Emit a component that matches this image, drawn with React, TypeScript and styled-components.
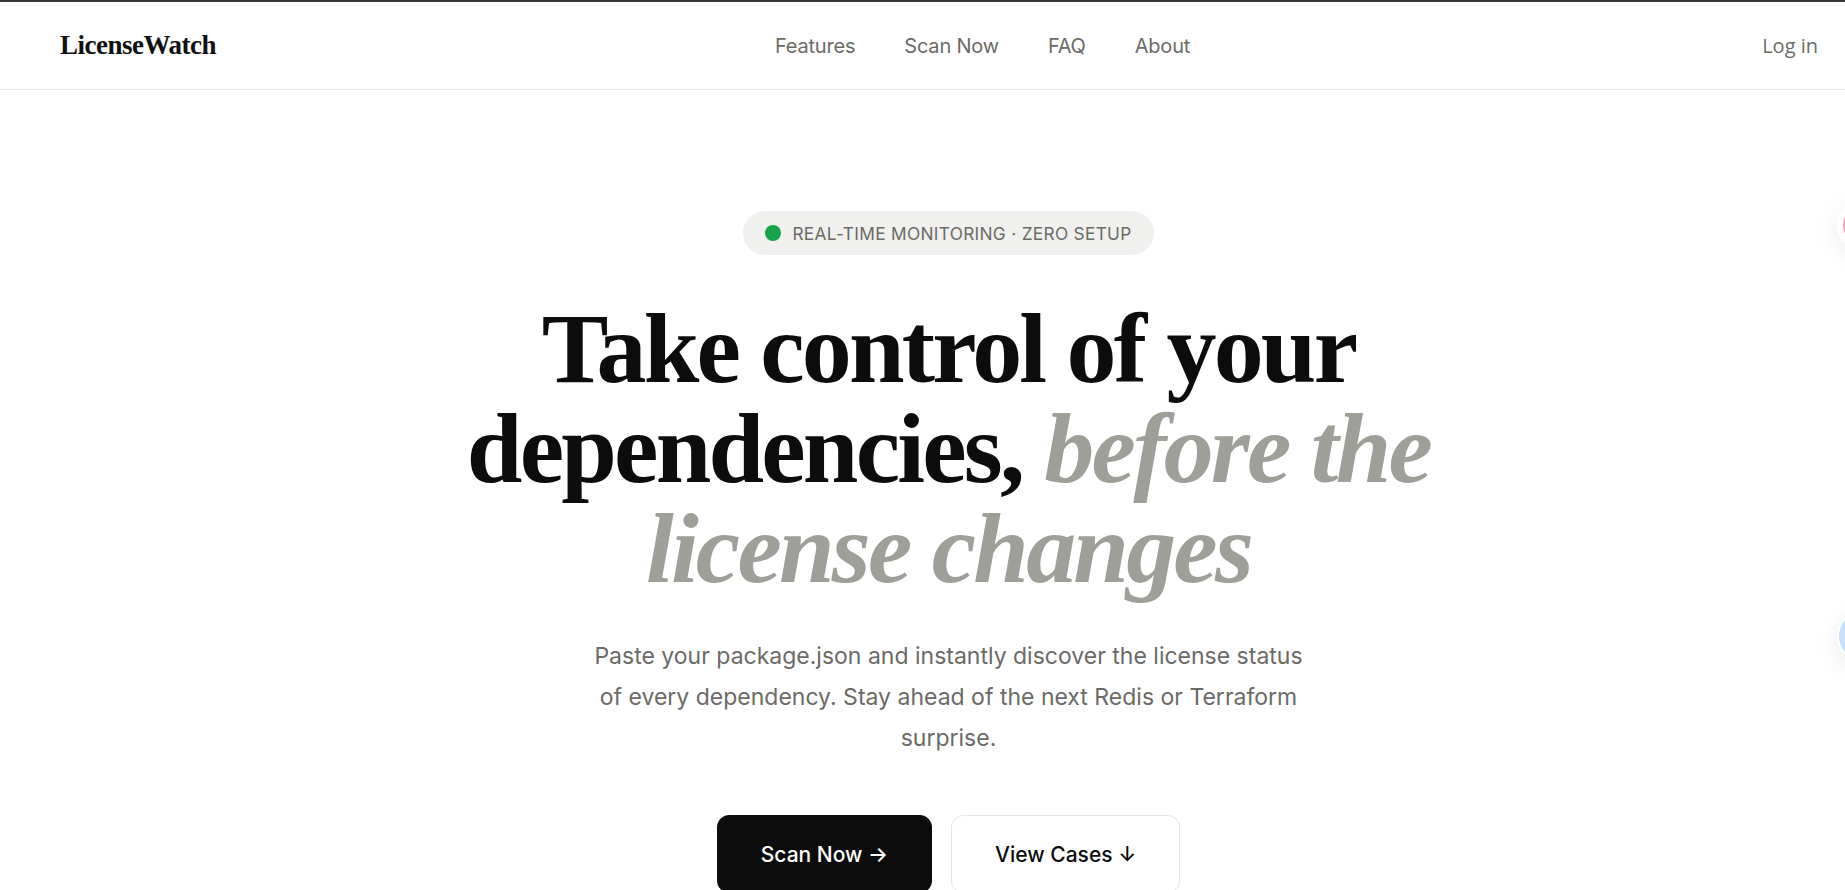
import React from "react";
import styled, { createGlobalStyle } from "styled-components";

const GlobalStyle = createGlobalStyle`
  html, body {
    margin: 0;
    padding: 0;
    background: #ffffff;
    overflow: hidden;
  }
  body {
    font-family: Inter, "DejaVu Sans", sans-serif;
    border-top: 2px solid #33393b;
  }
  * {
    box-sizing: border-box;
  }
`;

const Page = styled.div`
  position: relative;
  width: 1845px;
  height: 888px;
  overflow: hidden;
`;

const Header = styled.header`
  height: 88px;
  display: flex;
  align-items: center;
  padding: 0 27px 0 60px;
  border-bottom: 1px solid #e9e9e7;
`;

const Logo = styled.a`
  width: 158px;
  font-family: "Liberation Serif", "Times New Roman", serif;
  font-weight: 700;
  font-size: 27px;
  letter-spacing: -0.5px;
  color: #111111;
  text-decoration: none;
  white-space: nowrap;
`;

const Nav = styled.nav`
  display: flex;
  gap: 49px;
  margin-left: 557px;
`;

const NavLink = styled.a`
  font-size: 20px;
  color: #6b6b66;
  text-decoration: none;
  letter-spacing: -0.2px;
`;

const LoginLink = styled.a`
  margin-left: auto;
  font-family: "Open Sans", "Liberation Sans", sans-serif;
  font-size: 20px;
  color: #6b6b66;
  text-decoration: none;
`;

const Hero = styled.main`
  display: flex;
  flex-direction: column;
  align-items: center;
  padding: 121px 0 0 52px;
`;

const Badge = styled.div`
  display: flex;
  align-items: center;
  gap: 11px;
  height: 44px;
  padding: 0 22px;
  border-radius: 999px;
  background: #f0f0ee;
  color: #6b6b66;
  font-size: 17.3px;
  letter-spacing: 0.3px;
`;

const Dot = styled.span`
  width: 16px;
  height: 16px;
  border-radius: 50%;
  background: #16a34a;
`;

const Title = styled.h1`
  margin: 44px 0 0;
  font-family: "Liberation Serif", "Times New Roman", serif;
  font-weight: 700;
  font-size: 100px;
  line-height: 100px;
  letter-spacing: -2.8px;
  color: #0c0c0c;
  text-align: center;
`;

const Accent = styled.em`
  font-style: italic;
  color: #9f9f99;
`;

const Lead = styled.p`
  margin: 37px 0 0;
  max-width: 726px;
  font-size: 23px;
  line-height: 41px;
  color: #6b6a66;
  text-align: center;
`;

const Actions = styled.div`
  display: flex;
  gap: 19px;
  margin-top: 56px;
`;

const Button = styled.button<{ $primary?: boolean }>`
  height: 78px;
  padding: 0 43px;
  border-radius: 12px;
  font-family: Inter, "DejaVu Sans", sans-serif;
  font-size: 21px;
  font-weight: 500;
  cursor: pointer;
  background: ${(p) => (p.$primary ? "#0c0c0c" : "#ffffff")};
  color: ${(p) => (p.$primary ? "#ffffff" : "#0c0c0c")};
  border: 1px solid ${(p) => (p.$primary ? "#0c0c0c" : "#e5e5e3")};
`;

const Bubble = styled.div<{ $top: number; $size: number; $fill: string }>`
  position: absolute;
  left: 1837px;
  top: ${(p) => p.$top}px;
  width: ${(p) => p.$size}px;
  height: ${(p) => p.$size}px;
  border-radius: 50%;
  background: ${(p) => p.$fill};
  border: 2px solid #ffffff;
  box-shadow: 0 6px 24px rgba(0, 0, 0, 0.08);
  display: flex;
  align-items: center;
  padding-left: 4px;
`;

const BubbleCore = styled.span`
  width: 38px;
  height: 38px;
  border-radius: 50%;
  background: #f2a0bd;
`;

export default function App() {
  return (
    <Page>
      <GlobalStyle />
      <Header>
        <Logo href="#">LicenseWatch</Logo>
        <Nav>
          <NavLink href="#">Features</NavLink>
          <NavLink href="#">Scan Now</NavLink>
          <NavLink href="#">FAQ</NavLink>
          <NavLink href="#">About</NavLink>
        </Nav>
        <LoginLink href="#">Log in</LoginLink>
      </Header>
      <Hero>
        <Badge>
          <Dot />
          REAL-TIME MONITORING · ZERO SETUP
        </Badge>
        <Title>
          Take control of your
          <br />
          dependencies, <Accent>before the</Accent>
          <br />
          <Accent>license changes</Accent>
        </Title>
        <Lead>
          Paste your package.json and instantly discover the license status of
          every dependency. Stay ahead of the next Redis or Terraform surprise.
        </Lead>
        <Actions>
          <Button $primary>Scan Now →</Button>
          <Button>View Cases ↓</Button>
        </Actions>
      </Hero>
      <Bubble $top={197} $size={52} $fill="#ffffff">
        <BubbleCore />
      </Bubble>
      <Bubble $top={607} $size={54} $fill="#c9e0fb" />
    </Page>
  );
}
